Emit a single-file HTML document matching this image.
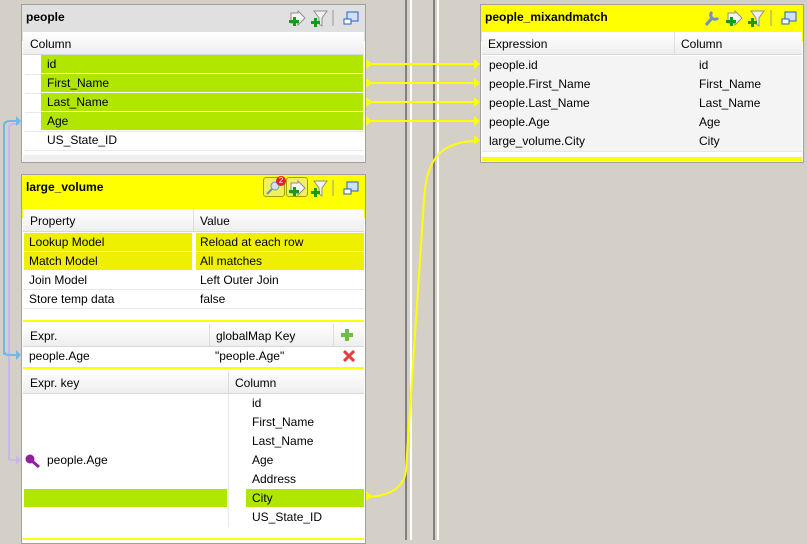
<!DOCTYPE html>
<html><head><style>
body{margin:0;width:807px;height:540px;background:#d4d0c8;position:relative;overflow:hidden;font-family:"Liberation Sans",Tahoma,sans-serif;font-size:12px;color:#000}
.a{position:absolute;box-sizing:border-box}
.panel{position:absolute;background:#fff;border:1px solid #a0a0a0;box-sizing:border-box}
.hd{position:absolute;left:0;right:0;top:0;font-weight:bold;font-size:12px;padding:5px 4px}
.t{position:absolute;white-space:nowrap;line-height:18px}
.ch{position:absolute;background:linear-gradient(#fff,#eeeeee);border-bottom:1px solid #d8d8d8}
.row{position:absolute;border-bottom:1px solid #e8e8e8}
.g{background:#b0e600}
.y{background:#efef00}
.yl{position:absolute;background:#ffff00}
</style></head><body>
<svg width="0" height="0" style="position:absolute">
<defs>
<g id="arr"><path d="M3 3 h7 v-2 l7 7 l-7 7 v-2 h-7z" fill="#f4f4f4" stroke="#909090"/><path d="M2 10 h4 v-3 h3 v3 h3 v3 h-3 v3 h-3 v-3 h-4z" fill="#1a9a1a" transform="translate(-1,0)"/></g>
<g id="fil"><path d="M4 1 h13 l-5 7 v8 l-3 -2 v-6z" fill="#f0f0f0" stroke="#909090"/><path d="M1 11 h3 v-3 h3 v3 h3 v3 h-3 v3 h-3 v-3 h-3z" fill="#1a9a1a"/></g>
<g id="win"><rect x="4" y="2" width="11" height="9" fill="#cfe0f8" stroke="#2060c0"/><rect x="1" y="9" width="7" height="5" fill="#fff" stroke="#2060c0"/></g>
</defs></svg>
<div class="a" style="left:405px;top:0;width:2px;height:540px;background:#808080"></div>
<div class="a" style="left:410px;top:0;width:2px;height:540px;background:#fff"></div>
<div class="a" style="left:433px;top:0;width:2px;height:540px;background:#808080"></div>
<div class="a" style="left:437px;top:0;width:2px;height:540px;background:#fff"></div>

<svg class="a" style="left:0;top:0" width="807" height="540">
<g stroke="#ffff00" stroke-width="2" fill="none">
<line x1="368" y1="64" x2="478" y2="64"/><line x1="368" y1="83" x2="478" y2="83"/>
<line x1="368" y1="102" x2="478" y2="102"/><line x1="368" y1="121" x2="478" y2="121"/>
<path d="M368 497 C400 495 405 480 406 470 L424 200 C426 160 440 141 478 141"/>
</g>
<g fill="#ffff00">
<path d="M366 59 l6 5 l-6 5z"/><path d="M366 78 l6 5 l-6 5z"/><path d="M366 97 l6 5 l-6 5z"/><path d="M366 116 l6 5 l-6 5z"/>
<path d="M474 59 l6 5 l-6 5z"/><path d="M474 78 l6 5 l-6 5z"/><path d="M474 97 l6 5 l-6 5z"/><path d="M474 116 l6 5 l-6 5z"/><path d="M474 135 l6 5 l-6 5z"/>
<path d="M366 491 l6 5 l-6 5z"/>
</g>
<path d="M9 460 L9 128 Q9 124 13 124 L20 124" stroke="#c8b8e8" stroke-width="2" fill="none"/>
<path d="M9 460 L18 460" stroke="#c8b8e8" stroke-width="2" fill="none"/>
<path d="M4 355 L4 126 Q4 121 10 121 L18 121" stroke="#70b8e8" stroke-width="2" fill="none"/>
<path d="M4 350 Q4 355 9 355 L18 355" stroke="#70b8e8" stroke-width="2" fill="none"/>
<path d="M16 116 l5 5 l-5 5z" fill="#70b8e8"/><path d="M16 350 l5 5 l-5 5z" fill="#70b8e8"/><path d="M16 455 l5 5 l-5 5z" fill="#c8b8e8"/>
</svg>

<!-- people -->
<div class="panel" style="left:21px;top:4px;width:345px;height:159px">
<div class="hd" style="background:#e0e0e0;height:26px">people</div>
<div class="ch" style="left:1px;right:1px;top:27px;height:22px"><span class="t" style="left:7px;top:3px">Column</span></div>
<div class="row" style="left:3px;right:2px;top:50px;height:19px"><div class="a g" style="left:16px;right:0;top:0;height:18px"></div><span class="t" style="left:22px">id</span></div>
<div class="row" style="left:3px;right:2px;top:69px;height:19px"><div class="a g" style="left:16px;right:0;top:0;height:18px"></div><span class="t" style="left:22px">First_Name</span></div>
<div class="row" style="left:3px;right:2px;top:88px;height:19px"><div class="a g" style="left:16px;right:0;top:0;height:18px"></div><span class="t" style="left:22px">Last_Name</span></div>
<div class="row" style="left:3px;right:2px;top:107px;height:19px"><div class="a g" style="left:16px;right:0;top:0;height:18px"></div><span class="t" style="left:22px">Age</span></div>
<div class="row" style="left:3px;right:2px;top:126px;height:19px"><span class="t" style="left:22px">US_State_ID</span></div>
<div class="a" style="left:1px;right:1px;top:150px;height:7px;background:#eee"></div>
<svg class="a" style="left:266px;top:3px" width="80" height="20"><use href="#arr" x="0" y="2"/><use href="#fil" x="22" y="2"/><line x1="45" y1="2" x2="45" y2="18" stroke="#999"/><use href="#win" x="55" y="2"/></svg>
</div>

<!-- large_volume -->
<div class="panel" style="left:21px;top:174px;width:345px;height:370px">
<div class="hd" style="background:#ffff00;height:33px">large_volume</div>
<div class="a" style="left:241px;top:2px;width:22px;height:20px;border:1px solid #a0a000;border-radius:3px;background:#f0f060"></div>
<svg class="a" style="left:244px;top:6px" width="14" height="14"><circle cx="9" cy="5" r="4" fill="#cfe0f8" stroke="#7090c0"/><line x1="6" y1="8" x2="1" y2="13" stroke="#7090c0" stroke-width="2"/></svg>
<div class="a" style="left:254px;top:1px;width:10px;height:10px;border-radius:5px;background:#e02020;color:#fff;font-size:8px;text-align:center;line-height:10px">2</div>
<div class="a" style="left:264px;top:2px;width:22px;height:20px;border:1px solid #a0a000;border-radius:3px;background:#f0f060"></div>
<svg class="a" style="left:266px;top:3px" width="80" height="20"><use href="#arr" x="0" y="2"/><use href="#fil" x="22" y="2"/><line x1="45" y1="2" x2="45" y2="18" stroke="#999"/><use href="#win" x="55" y="2"/></svg>
<div class="ch" style="left:1px;right:1px;top:34px;height:22px"><span class="t" style="left:7px;top:3px">Property</span><span class="t" style="left:177px;top:3px">Value</span><div class="a" style="left:170px;top:0;width:1px;height:22px;background:#ddd"></div></div>
<div class="a y" style="left:2px;top:58px;width:168px;height:18px"></div><div class="a y" style="left:174px;top:58px;width:168px;height:18px"></div>
<div class="a y" style="left:2px;top:77px;width:168px;height:18px"></div><div class="a y" style="left:174px;top:77px;width:168px;height:18px"></div>
<span class="t" style="left:7px;top:58px">Lookup Model</span><span class="t" style="left:178px;top:58px">Reload at each row</span>
<span class="t" style="left:7px;top:77px">Match Model</span><span class="t" style="left:178px;top:77px">All matches</span>
<span class="t" style="left:7px;top:96px">Join Model</span><span class="t" style="left:178px;top:96px">Left Outer Join</span>
<span class="t" style="left:7px;top:115px">Store temp data</span><span class="t" style="left:178px;top:115px">false</span>
<div class="a" style="left:1px;right:1px;top:114px;height:1px;background:#e8e8e8"></div>
<div class="a" style="left:1px;right:1px;top:133px;height:1px;background:#e8e8e8"></div>
<div class="yl" style="left:1px;right:1px;top:145px;height:2px"></div>
<div class="ch" style="left:1px;right:1px;top:149px;height:22px"><span class="t" style="left:7px;top:3px">Expr.</span><span class="t" style="left:193px;top:3px">globalMap Key</span><div class="a" style="left:186px;top:0;width:1px;height:22px;background:#ddd"></div><div class="a" style="left:310px;top:0;width:1px;height:22px;background:#ddd"></div>
<svg class="a" style="left:318px;top:5px" width="12" height="12"><path d="M4 0h4v4h4v4h-4v4h-4v-4h-4v-4h4z" fill="#70c040"/></svg></div>
<span class="t" style="left:7px;top:172px">people.Age</span><span class="t" style="left:193px;top:172px">"people.Age"</span>
<svg class="a" style="left:321px;top:175px" width="12" height="12"><path d="M1 1L11 11M11 1L1 11" stroke="#e04040" stroke-width="3"/></svg>
<div class="yl" style="left:1px;right:1px;top:192px;height:2px"></div>
<div class="ch" style="left:1px;right:1px;top:196px;height:22px"><span class="t" style="left:7px;top:3px">Expr. key</span><span class="t" style="left:212px;top:3px">Column</span><div class="a" style="left:205px;top:0;width:1px;height:22px;background:#ddd"></div></div>
<div class="a" style="left:206px;top:219px;width:1px;height:133px;background:#e8e8e8"></div>
<span class="t" style="left:230px;top:219px">id</span>
<span class="t" style="left:230px;top:238px">First_Name</span>
<span class="t" style="left:230px;top:257px">Last_Name</span>
<svg class="a" style="left:3px;top:279px" width="16" height="16"><circle cx="5" cy="5" r="4.5" fill="#9020a0"/><line x1="7" y1="7" x2="14" y2="13" stroke="#9020a0" stroke-width="3"/></svg>
<span class="t" style="left:25px;top:276px">people.Age</span><span class="t" style="left:230px;top:276px">Age</span>
<span class="t" style="left:230px;top:295px">Address</span>
<div class="a g" style="left:2px;top:314px;width:203px;height:18px"></div><div class="a g" style="left:224px;top:314px;width:118px;height:18px"></div>
<span class="t" style="left:230px;top:314px">City</span>
<span class="t" style="left:230px;top:333px">US_State_ID</span>
<div class="yl" style="left:1px;right:1px;top:363px;height:2px"></div>
</div>

<!-- mixandmatch -->
<div class="panel" style="left:480px;top:4px;width:324px;height:159px">
<div class="hd" style="background:#ffff00;height:26px">people_mixandmatch</div>
<svg class="a" style="left:222px;top:3px" width="100" height="20"><path d="M3 17 L10 9 M9 4 a4 4 0 1 0 6 6" stroke="#7090c0" stroke-width="3" fill="none"/><use href="#arr" x="22" y="2"/><use href="#fil" x="44" y="2"/><line x1="68" y1="2" x2="68" y2="18" stroke="#999"/><use href="#win" x="78" y="2"/></svg>
<div class="ch" style="left:1px;right:1px;top:27px;height:22px"><span class="t" style="left:6px;top:3px">Expression</span><span class="t" style="left:199px;top:3px">Column</span><div class="a" style="left:192px;top:0;width:1px;height:22px;background:#ddd"></div></div>
<div class="row" style="left:1px;right:1px;top:51px;height:19px;background:#f4f4f4"><span class="t" style="left:7px">people.id</span><span class="t" style="left:217px">id</span></div>
<div class="row" style="left:1px;right:1px;top:70px;height:19px;background:#f4f4f4"><span class="t" style="left:7px">people.First_Name</span><span class="t" style="left:217px">First_Name</span></div>
<div class="row" style="left:1px;right:1px;top:89px;height:19px;background:#f4f4f4"><span class="t" style="left:7px">people.Last_Name</span><span class="t" style="left:217px">Last_Name</span></div>
<div class="row" style="left:1px;right:1px;top:108px;height:19px;background:#f4f4f4"><span class="t" style="left:7px">people.Age</span><span class="t" style="left:217px">Age</span></div>
<div class="row" style="left:1px;right:1px;top:127px;height:19px;background:#f4f4f4"><span class="t" style="left:7px">large_volume.City</span><span class="t" style="left:217px">City</span></div>
<div class="yl" style="left:1px;right:1px;top:152px;height:4px"></div>
</div>
</body></html>
